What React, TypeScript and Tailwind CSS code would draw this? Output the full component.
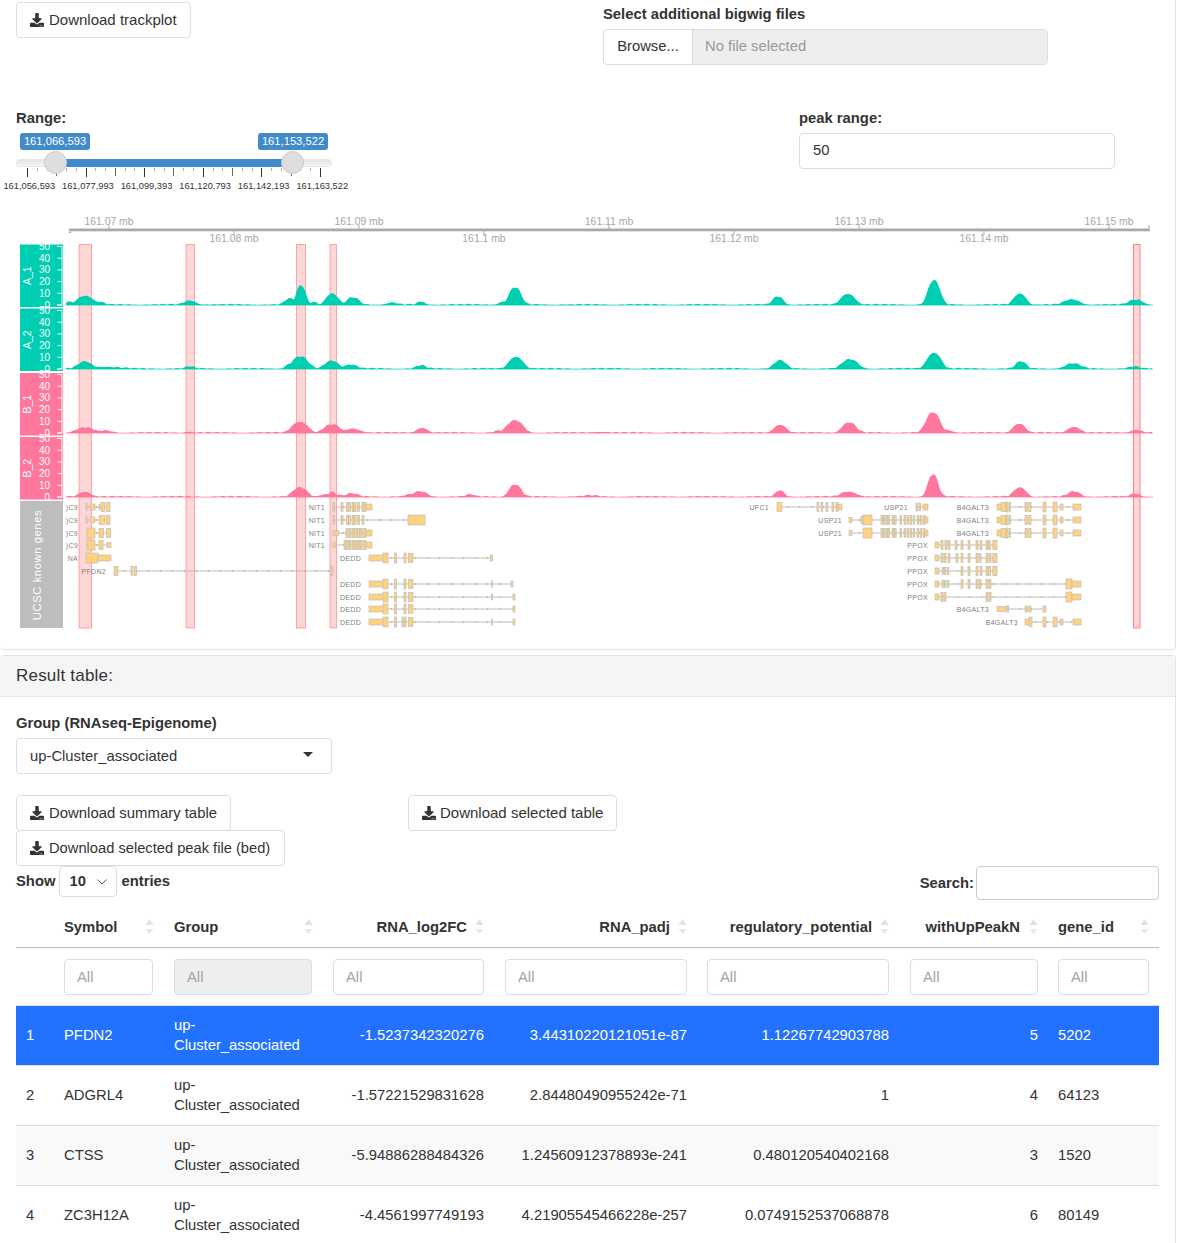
import React from "react";
import { FaDownload } from "react-icons/fa";

type Peak = [number, number, number];
const TEAL = "#00CEB3";
const PINK = "#FF779C";

function areaPath(base: number, peaks: Peak[], seed: number) {
  let d = `M66 ${base}`;
  for (let x = 66; x <= 1152; x += 1.5) {
    let h = 0;
    for (const [c, a, w] of peaks) {
      const t = Math.abs(x - c) / (w * 1.15);
      h = Math.max(h, a * Math.exp(-Math.pow(t, 2.5)));
    }
    const n = Math.abs(Math.sin(x * 0.37 + seed) * Math.sin(x * 0.053 + seed * 2)) * 1.2;
    d += ` L${x} ${(base - h - n).toFixed(1)}`;
  }
  return d + ` L1152 ${base} Z`;
}

const tracks: { label: string; color: string; top: number; bottom: number; base: number; peaks: Peak[] }[] = [
  { label: "A_1", color: TEAL, top: 244.5, bottom: 307, base: 305, peaks: [[70, 3, 5], [85, 9, 9], [98, 3, 6], [190, 4, 7], [290, 6, 6], [301, 19, 5.5], [314, 3, 4], [332, 11, 7], [353, 7, 7], [392, 2, 6], [421, 3, 4], [503, 3, 5], [515, 17, 7], [778, 8, 6], [848, 11, 8], [934, 24, 7], [1020, 11, 7], [1072, 5, 9], [1136, 5, 8]] },
  { label: "A_2", color: TEAL, top: 308.5, bottom: 371, base: 369, peaks: [[85, 7, 8], [100, 2, 20], [190, 2, 5], [291, 5, 6], [300, 12, 9], [332, 8, 8], [350, 4, 8], [421, 3, 6], [516, 12, 8], [780, 8, 7], [850, 9, 9], [934, 16, 8], [1021, 7, 6], [1073, 5, 9], [1134, 2, 6]] },
  { label: "B_1", color: PINK, top: 373, bottom: 435.5, base: 433, peaks: [[85, 5, 10], [105, 2, 8], [188, 1, 4], [300, 11, 9], [332, 8, 9], [353, 4, 9], [422, 5, 6], [500, 2, 6], [515, 12, 9], [600, 1, 8], [780, 8, 7], [849, 10, 8], [933, 20, 8], [945, 3, 8], [1019, 9, 7], [1074, 6, 7], [1136, 3, 6]] },
  { label: "B_2", color: PINK, top: 437, bottom: 499.5, base: 497, peaks: [[85, 5, 7], [300, 9, 8], [330, 3, 10], [332, 5, 4], [352, 3, 7], [408, 2, 4], [420, 5, 8], [470, 2, 5], [515, 12, 7], [590, 1, 8], [780, 6, 5], [849, 5, 9], [933, 22, 6], [1020, 9, 7], [1074, 5, 7], [1135, 3, 5]] },
];

const highlights: [number, number][] = [[79, 91.5], [186, 194.5], [296.5, 305.5], [330, 336.5], [1133.5, 1140]];

type Gene = { label: string; end: number; y: number; from: number; to: number; ex: [number, number, number][] };
const n = (xs: number[], w = 2, h = 9): [number, number, number][] => xs.map((x) => [x, x + w, h]);
const nitHead = n([341, 346.5, 348.5, 352, 354, 357.5, 362]);
const uspComb = n([881, 883.5, 886, 888, 892, 894.5, 900, 904, 907, 910, 913, 917, 920], 1.6);
const b4: [number, number, number][] = [[997, 1005, 6], [1001, 1006, 9], [1006, 1008, 10], [1009, 1010.5, 9], [1025, 1027, 9], [1028, 1031, 9], [1043, 1046, 10], [1053, 1057, 10], [1060, 1063, 6], [1073, 1081, 6]];
const dedd = (extra: [number, number, number][], to: number, more: [number, number, number][] = []): [number, number, number][] => [[369, 384, 6], [383, 388, 10], [394.5, 396.5, 10], ...more, [404, 406, 10], [408.5, 413, 9], ...extra, [to - 2, to, 6]];

const genes: Gene[] = [
  { label: ")C9", end: 78, y: 507, from: 86, to: 110, ex: [[86, 87, 7], [90, 95, 6], [99, 100, 5], [101, 104.5, 9], [106, 110, 9]] },
  { label: ")C9", end: 78, y: 520, from: 86, to: 110, ex: [[86, 87, 7], [90, 95, 6], [99, 104.5, 9], [106, 110, 9]] },
  { label: ")C9", end: 78, y: 533, from: 86, to: 110, ex: [[87, 95, 10], [99, 103.5, 9], [106.5, 110.5, 9]] },
  { label: ")C9", end: 78, y: 545, from: 86, to: 111, ex: [[87, 95, 10], [99, 103, 9], [107, 111, 5]] },
  { label: "NA", end: 78, y: 558, from: 86, to: 111, ex: [[86, 98, 10], [98, 111, 6]] },
  { label: "PFDN2", end: 106, y: 571, from: 114, to: 333, ex: [[114, 118, 9], [131, 133, 9], [134.5, 136.5, 9], [331, 333, 9]] },
  { label: "NIT1", end: 325, y: 507, from: 333, to: 372, ex: [[333, 334.5, 9], ...nitHead, [363, 366, 9], [366, 372, 6]] },
  { label: "NIT1", end: 325, y: 520, from: 333, to: 425, ex: [[333, 334.5, 9], ...nitHead, [408, 425, 10]] },
  { label: "NIT1", end: 325, y: 533, from: 333, to: 372, ex: [[333, 338.5, 5], ...n([346, 349, 352, 354.5, 357.5, 360]), [363, 366, 9], [366, 372, 6]] },
  { label: "NIT1", end: 325, y: 545, from: 333, to: 372, ex: [[333, 336, 5], ...n([344, 346.5, 349, 352, 354.5, 357.5, 360]), [363, 366, 9], [366, 372, 6]] },
  { label: "DEDD", end: 361, y: 558, from: 369, to: 492, ex: dedd([], 492.5) },
  { label: "DEDD", end: 361, y: 584, from: 369, to: 513, ex: dedd([[491.5, 492.5, 6]], 513) },
  { label: "DEDD", end: 361, y: 597, from: 369, to: 515, ex: dedd([[491.5, 492.5, 6]], 515) },
  { label: "DEDD", end: 361, y: 609, from: 369, to: 515, ex: dedd([], 515) },
  { label: "DEDD", end: 361, y: 622, from: 369, to: 515, ex: dedd([[491.5, 492.5, 6]], 515, [[402, 403, 10]]) },
  { label: "UFC1", end: 769, y: 507, from: 777, to: 842, ex: [[777, 782, 9], ...n([817, 821, 826, 832], 1.8), [836, 838, 9], [838, 842, 6]] },
  { label: "USP21", end: 908, y: 507, from: 916, to: 928, ex: [[916, 917.5, 8], [919, 920.5, 8], [923, 928, 6]] },
  { label: "USP21", end: 842, y: 520, from: 849, to: 928, ex: [[849, 852, 5], [861, 863, 7], [863, 872, 10], ...uspComb, [923, 925, 9], [925, 928, 6]] },
  { label: "USP21", end: 842, y: 533, from: 849, to: 928, ex: [[849, 852, 5], [863, 872, 10], ...uspComb, [923, 925, 9], [925, 928, 6]] },
  { label: "B4GALT3", end: 989, y: 507, from: 997, to: 1081, ex: b4 },
  { label: "B4GALT3", end: 989, y: 520, from: 997, to: 1081, ex: b4 },
  { label: "B4GALT3", end: 989, y: 533, from: 997, to: 1081, ex: b4 },
  { label: "PPOX", end: 928, y: 545, from: 935, to: 997, ex: [[935, 939, 6], ...n([941, 945, 948, 955, 961, 968, 976, 980, 986, 988.5, 993]), [993, 997, 9]] },
  { label: "PPOX", end: 928, y: 558, from: 935, to: 997, ex: [[935, 939, 6], ...n([941, 944, 948, 956, 961, 968, 976, 979, 986, 989, 993]), [993, 997, 9]] },
  { label: "PPOX", end: 928, y: 571, from: 935, to: 997, ex: [[935, 939, 6], ...n([942, 944.5, 947.5], 1.4, 7), ...n([961, 968, 976, 980, 986, 988.5, 993]), [993, 997, 9]] },
  { label: "PPOX", end: 928, y: 584, from: 935, to: 1081, ex: [[935, 939, 6], ...n([942, 944.5, 947.5], 1.4, 7), ...n([961, 968, 976, 979, 986, 989]), [1066, 1072, 10], [1072, 1081, 6]] },
  { label: "PPOX", end: 928, y: 597, from: 935, to: 1081, ex: [[935, 939, 6], [941, 943, 9], [944, 946, 9], [986, 988, 9], [989, 991, 9], [1066, 1072, 10], [1072, 1081, 6]] },
  { label: "B4GALT3", end: 989, y: 609, from: 997, to: 1046, ex: [[997, 1006, 5], [1007, 1008.5, 7], [1025, 1027, 6], [1028, 1031, 6], [1043, 1046, 6]] },
  { label: "B4GALT3", end: 1018, y: 622, from: 1025, to: 1081, ex: [[1025, 1031, 6], [1029, 1032, 10], [1043, 1046, 10], [1053, 1057, 10], [1060, 1063, 6], [1073, 1081, 6]] },
];

function GeneRow({ g }: { g: Gene }) {
  const marks: number[] = [];
  for (let x = g.from + 10; x < g.to - 4; x += 12) marks.push(x);
  return (
    <g>
      <text x={g.end} y={g.y + 2.5} textAnchor="end" fontSize="7" letterSpacing="0.3" fill="#808080">{g.label}</text>
      <line x1={g.from} x2={g.to} y1={g.y} y2={g.y} stroke="#bbb" strokeWidth="1" />
      {marks.map((x) => <path key={x} d={`M${x + 1} ${g.y - 1.2}L${x} ${g.y}L${x + 1} ${g.y + 1.2}`} fill="none" stroke="#aaa" strokeWidth="0.7" />)}
      {g.ex.map(([a, b, h], i) => (
        <rect key={i} x={a} y={g.y - h / 2} width={b - a} height={h} fill="#FFD27F" stroke="#bdbdbd" strokeWidth="0.7" />
      ))}
    </g>
  );
}

function TrackPlot() {
  const topTicks = [[109, "161.07 mb"], [359, "161.09 mb"], [609, "161.11 mb"], [859, "161.13 mb"], [1109, "161.15 mb"]] as const;
  const lowTicks = [[234, "161.08 mb"], [484, "161.1 mb"], [734, "161.12 mb"], [984, "161.14 mb"]] as const;
  return (
    <svg width="1176" height="430" viewBox="0 205 1176 430" className="block -mx-4" style={{ fontFamily: "'Liberation Sans', sans-serif" }}>
      <rect x="69" y="228.5" width="1081" height="2.8" fill="#aaaaaa" />
      <path d="M69 231L72 233H69Z M1150 228L1147 226H1150Z" fill="#aaaaaa" />
      {topTicks.map(([x, t]) => (
        <g key={t}>
          <line x1={x} x2={x} y1={225} y2={229} stroke="#aaa" />
          <text x={x} y={225} textAnchor="middle" fontSize="10.4" fill="#a6a6a6">{t}</text>
        </g>
      ))}
      {lowTicks.map(([x, t]) => (
        <g key={t}>
          <line x1={x} x2={x} y1={231} y2={235} stroke="#aaa" />
          <text x={x} y={242} textAnchor="middle" fontSize="10.4" fill="#a6a6a6">{t}</text>
        </g>
      ))}
      {highlights.map(([a, b], i) => (
        <rect key={a} x={a} y="244.5" width={b - a} height="383.5" fill="#ff0000" fillOpacity="0.16" stroke="#ff0000" strokeOpacity={i === 4 ? 0.45 : 0.3} strokeWidth="1" />
      ))}
      {tracks.map((t, i) => (
        <g key={t.label}>
          <rect x="20" y={t.top} width="43" height={t.bottom - t.top} fill={t.color} />
          <text transform={`translate(30.5 ${(t.top + t.bottom) / 2}) rotate(-90)`} textAnchor="middle" fontSize="10.5" fill="#fff">{t.label}</text>
          <path d={`M57 ${t.base - 58.5}H62V${t.base}H57`} fill="none" stroke="#ffffff" strokeWidth="0.9" />
          {[0, 10, 20, 30, 40, 50].map((v) => (
            <g key={v}>
              <line x1="57.5" x2="62" y1={t.base - v * 1.17} y2={t.base - v * 1.17} stroke="#fff" strokeWidth="0.9" />
              <text x="50" y={t.base - v * 1.17 + 3.5} textAnchor="end" fontSize="10" fill="#fff">{v}</text>
            </g>
          ))}
          <rect x="66" y={t.base - 0.5} width="1087" height="1.3" fill={t.color} opacity="0.55" />
          <path d={areaPath(t.base, t.peaks, i + 1)} fill={t.color} />
        </g>
      ))}
      <rect x="20" y="501" width="43" height="127" fill="#bdbdbd" />
      <text transform="translate(41 565) rotate(-90)" textAnchor="middle" fontSize="11.2" letterSpacing="0.6" fill="#fff">UCSC known genes</text>
      {genes.map((g, i) => <GeneRow key={i} g={g} />)}
    </svg>
  );
}

function Btn({ children, className = "" }: { children: React.ReactNode; className?: string }) {
  return (
    <button className={`flex items-center h-[36px] pl-[13px] bg-white border border-[#dddddd] rounded-[4px] text-[#333] whitespace-nowrap ${className}`}>
      <FaDownload className="w-[14px] h-[14px] text-[#333]" />
      {children}
    </button>
  );
}

function Slider() {
  const labels = ["161,056,593", "161,077,993", "161,099,393", "161,120,793", "161,142,193", "161,163,522"];
  const ticks = Array.from({ length: 11 }, (_, i) => i);
  return (
    <div className="w-[316px]">
      <div className="relative h-[22px] mt-[6px]">
        <div className="absolute left-[4px] top-0 h-[17px] w-[70px] rounded-[3px] bg-[#428BCA] text-white text-[11.2px] leading-[17px] text-center">161,066,593</div>
        <div className="absolute left-[242px] top-0 h-[17px] w-[70px] rounded-[3px] bg-[#428BCA] text-white text-[11.2px] leading-[17px] text-center">161,153,522</div>
      </div>
      <div className="relative h-[8px] mt-[4px] rounded-full bg-gradient-to-b from-[#e4e4e4] to-[#f6f6f6] border border-[#e6e6e6]">
        <div className="absolute left-[39px] right-[40px] -top-px h-[8px] bg-[#428BCA]" />
        <div className="absolute left-[27px] top-[-9px] w-[23px] h-[23px] rounded-full bg-[#dedede] border border-[#cccccc]" />
        <div className="absolute left-[264px] top-[-9px] w-[23px] h-[23px] rounded-full bg-[#dedede] border border-[#cccccc]" />
      </div>
      <div className="ml-[11px] w-[294px] flex justify-between items-start mt-px">
        {ticks.flatMap((i) => [
          <div key={`M${i}`} className={`w-px ${i % 2 === 0 ? "h-[9px] bg-[#333]" : "h-[8px] bg-[#666]"}`} />,
          ...(i < 10 ? [<div key={`a${i}`} className="w-px h-[3px] bg-[#aaa]" />, <div key={`b${i}`} className="w-px h-[3px] bg-[#aaa]" />] : []),
        ])}
      </div>
      <div className="grid grid-cols-[repeat(6,58.6px)] -ml-[16px] mt-[2px] w-[352px]">
        {labels.map((l) => <div key={l} className="text-center text-[9.3px] leading-[14px] text-[#333]">{l}</div>)}
      </div>
    </div>
  );
}

function SortArrows() {
  return (
    <svg width="9" height="15" viewBox="0 0 9 15" className="shrink-0">
      <path d="M4.5 0L8.5 6H0.5Z" fill="#e2e2e2" />
      <path d="M4.5 15L8.5 10H0.5Z" fill="#e8e8e8" />
    </svg>
  );
}

const cols = [
  { name: "", w: "w-[38px]", input: "", gap: "gap-[8px]" },
  { name: "Symbol", w: "w-[110px]", input: "mr-px", gap: "gap-[8px]" },
  { name: "Group", w: "w-[159px]", input: "mr-px", gap: "gap-[8px]" },
  { name: "RNA_log2FC", w: "w-[171px]", right: true, input: "", gap: "gap-[8px]" },
  { name: "RNA_padj", w: "w-[203px]", right: true, input: "ml-px", gap: "gap-[8px]" },
  { name: "regulatory_potential", w: "w-[202px]", right: true, input: "", gap: "gap-[8px]" },
  { name: "withUpPeakN", w: "w-[149px]", right: true, input: "ml-px", gap: "gap-[9px]" },
  { name: "gene_id", w: "w-[111px]", input: "", gap: "gap-[8px]" },
];

const rows = [
  ["1", "PFDN2", "-1.5237342320276", "3.44310220121051e-87", "1.12267742903788", "5", "5202"],
  ["2", "ADGRL4", "-1.57221529831628", "2.84480490955242e-71", "1", "4", "64123"],
  ["3", "CTSS", "-5.94886288484326", "1.24560912378893e-241", "0.480120540402168", "3", "1520"],
  ["4", "ZC3H12A", "-4.4561997749193", "4.21905545466228e-257", "0.0749152537068878", "6", "80149"],
];

function ResultTable() {
  return (
    <table className="w-[1143px] table-fixed border-collapse">
      <thead>
        <tr className="h-[42px] border-b border-[#bbbbbb]">
          {cols.map((c, i) => (
            <th key={i} className={`${c.w} px-[10px] font-bold text-[#333]`}>
              {c.name && (
                <div className={`flex items-center ${c.gap} pt-[2px] ${c.right ? "justify-end" : "justify-between"}`}>
                  <span>{c.name}</span>
                  <SortArrows />
                </div>
              )}
            </th>
          ))}
        </tr>
      </thead>
      <tbody>
        <tr className="h-[58px]">
          {cols.map((c, i) => (
            <td key={i} className="px-[10px] pt-[2px]">
              {c.name && (
                <div className={`h-[36px] leading-[34px] px-[12px] rounded-[4px] border border-[#dddddd] text-[#a3a3a3] ${c.input} ${c.name === "Group" ? "bg-[#eeeeee]" : "bg-white"}`}>All</div>
              )}
            </td>
          ))}
        </tr>
        {rows.map((r, i) => (
          <tr key={r[0]} className={`h-[60px] border-t ${i === 0 ? "bg-[#2272FF] text-white border-[#dddddd]" : i === 2 ? "bg-[#f9f9f9] text-[#333] border-[#dddddd]" : "bg-white text-[#333] border-[#dddddd]"}`}>
            <td className="px-[10px]">{r[0]}</td>
            <td className="px-[10px]">{r[1]}</td>
            <td className="px-[10px] leading-[20.5px]">up-<br />Cluster_associated</td>
            <td className="px-[10px] text-right whitespace-nowrap">{r[2]}</td>
            <td className="px-[10px] text-right whitespace-nowrap">{r[3]}</td>
            <td className="px-[10px] text-right whitespace-nowrap">{r[4]}</td>
            <td className="px-[10px] text-right">{r[5]}</td>
            <td className="px-[10px]">{r[6]}</td>
          </tr>
        ))}
      </tbody>
    </table>
  );
}

export default function App() {
  return (
    <div className="w-[1182px] h-[1243px] overflow-hidden bg-white text-[14.8px] text-[#333] font-['Liberation_Sans',sans-serif]">
      <section className="w-[1176px] h-[650px] border-r border-b border-[#e3e3e3] rounded-br-[4px] rounded-bl-[4px] px-[16px]">
        <div className="flex h-[110px] pt-[2px]">
          <div className="w-[587px]"><Btn className="w-[175px] text-[15px] gap-[5px]">Download trackplot</Btn></div>
          <div>
            <div className="font-bold mt-[2px] leading-[20px]">Select additional bigwig files</div>
            <div className="flex w-[445px] h-[36px] mt-[5px] rounded-[4px] border border-[#dddddd] overflow-hidden">
              <div className="w-[89px] pb-px border-r border-[#dddddd] flex items-center justify-center">Browse...</div>
              <div className="flex-1 pb-px bg-[#eeeeee] text-[#999] px-[12px] flex items-center">No file selected</div>
            </div>
          </div>
        </div>
        <div className="flex h-[95px]">
          <div className="w-[783px]">
            <div className="font-bold leading-[17px]">Range:</div>
            <Slider />
          </div>
          <div>
            <div className="font-bold leading-[17px]">peak range:</div>
            <div className="w-[316px] h-[36px] mt-[6px] pb-px px-[13px] rounded-[4px] border border-[#dddddd] flex items-center">50</div>
          </div>
        </div>
        <TrackPlot />
      </section>

      <section className="w-[1176px] mt-[5px] border-r border-t border-[#e3e3e3] rounded-t-[4px]">
        <div className="h-[41px] px-[16px] bg-[#f5f5f5] border-b border-[#e8e8e8] flex items-center text-[17px] tracking-[0.2px]">Result table:</div>
        <div className="px-[16px]">
          <div className="font-bold mt-[18px] leading-[17px]">Group (RNAseq-Epigenome)</div>
          <div className="mt-[6px] w-[316px] h-[36px] rounded-[4px] border border-[#dddddd] px-[13px] flex items-center justify-between">
            <span>up-Cluster_associated</span>
            <svg width="10" height="5" viewBox="0 0 10 5" className="mr-[5px] mb-[3px]"><path d="M0 0H10L5 5Z" fill="#333" /></svg>
          </div>
          <div className="flex mt-[21px] h-[35px]">
            <Btn className="h-[35px] w-[215px] text-[14.9px] gap-[5px]">Download summary table</Btn>
            <Btn className="h-[35px] ml-[177px] w-[209px] text-[15px] gap-[4px]">Download selected table</Btn>
          </div>
          <Btn className="w-[269px] text-[14.7px] gap-[5px]">Download selected peak file (bed)</Btn>
          <div className="flex justify-between items-start h-[39px] w-[1143px]">
            <div className="flex items-center h-[31px] font-bold">
              Show
              <div className="mx-[4px] w-[58px] h-[31px] rounded-[4px] border border-[#dddddd] px-[9px] flex items-center justify-between">
                <span>10</span>
                <svg width="10" height="6" viewBox="0 0 10 6"><path d="M0.5 0.5L5 5L9.5 0.5" fill="none" stroke="#555" strokeWidth="1" /></svg>
              </div>
              entries
            </div>
            <div className="flex items-center h-[34px] font-bold">
              Search:
              <div className="ml-[2px] w-[183px] h-[34px] rounded-[4px] border border-[#cccccc]" />
            </div>
          </div>
          <ResultTable />
        </div>
      </section>
    </div>
  );
}
